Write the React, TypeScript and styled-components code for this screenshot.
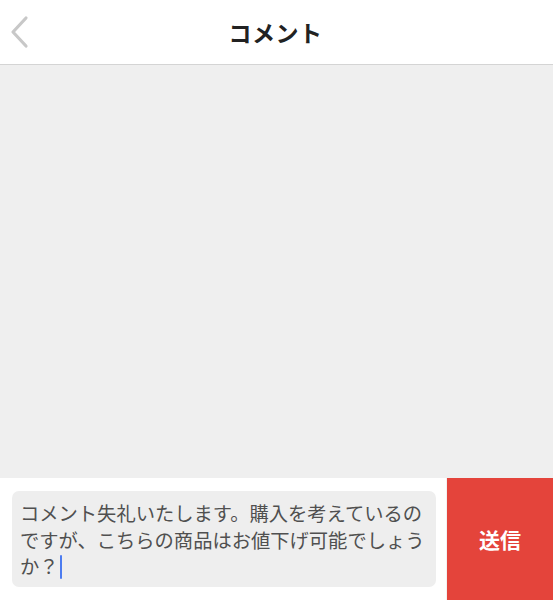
import * as React from 'react';
import styled, { createGlobalStyle } from 'styled-components';

const GlobalStyle = createGlobalStyle`
  html, body {
    margin: 0;
    padding: 0;
    background: #ffffff;
  }
  body {
    font-family: 'Noto Sans CJK JP', 'Noto Sans', sans-serif;
  }
`;

const COLORS = {
  border: '#d4d4d4',
  feed: '#efefef',
  input: '#eeeeee',
  text: '#505050',
  title: '#222222',
  send: '#e4443b',
  caret: '#4c7cf0',
  chevron: '#c8c8c8',
};

const BackIcon = () => (
  <svg width="22" height="34" viewBox="0 0 22 34" fill="none">
    <path d="M17 3 L4 17 L17 31" stroke={COLORS.chevron} strokeWidth="3.2" strokeLinecap="round" strokeLinejoin="round" />
  </svg>
);

export default function App() {
  const message =
    'コメント失礼いたします。購入を考えているのですが、こちらの商品はお値下げ可能でしょうか？';

  return (
    <>
      <GlobalStyle />
      <Screen>
        <Header>
          <BackButton aria-label="戻る">
            <BackIcon />
          </BackButton>
          <Title>コメント</Title>
        </Header>
        <Feed />
        <Composer>
          <InputCell>
            <Input>
              {message}
              <Caret />
            </Input>
          </InputCell>
          <SendButton>送信</SendButton>
        </Composer>
      </Screen>
    </>
  );
}

const Screen = styled.div`
  width: 553px;
  height: 600px;
  display: flex;
  flex-direction: column;
  overflow: hidden;
`;

const Header = styled.header`
  height: 64px;
  flex-shrink: 0;
  display: flex;
  align-items: center;
  justify-content: center;
  position: relative;
  background: #ffffff;
  border-bottom: 1px solid ${COLORS.border};
`;

const BackButton = styled.button`
  position: absolute;
  left: 9px;
  top: 15px;
  padding: 0;
  border: none;
  background: none;
  display: flex;
`;

const Title = styled.h1`
  margin: 0 0 0 -2px;
  font-size: 23px;
  font-weight: bold;
  color: ${COLORS.title};
  letter-spacing: 0.5px;
`;

const Feed = styled.main`
  flex: 1;
  background: ${COLORS.feed};
`;

const Composer = styled.footer`
  height: 122px;
  flex-shrink: 0;
  display: flex;
  background: #ffffff;
`;

const InputCell = styled.div`
  flex: 1;
  padding: 13px 10px 13px 12px;
  border-right: 1px solid #f2f2f2;
`;

const Input = styled.div`
  height: 100%;
  box-sizing: border-box;
  background: ${COLORS.input};
  border-radius: 7px;
  padding: 9px 8px 0 8px;
  font-size: 19.3px;
  line-height: 26.5px;
  color: ${COLORS.text};
  word-break: break-all;
`;

const Caret = styled.span`
  display: inline-block;
  width: 2.5px;
  height: 24px;
  margin-left: 1px;
  vertical-align: -5px;
  background: ${COLORS.caret};
  border-radius: 1px;
`;

const SendButton = styled.button`
  width: 106px;
  flex-shrink: 0;
  border: none;
  background: ${COLORS.send};
  color: #ffffff;
  font-family: inherit;
  font-size: 21px;
  font-weight: bold;
  padding: 0;
`;
